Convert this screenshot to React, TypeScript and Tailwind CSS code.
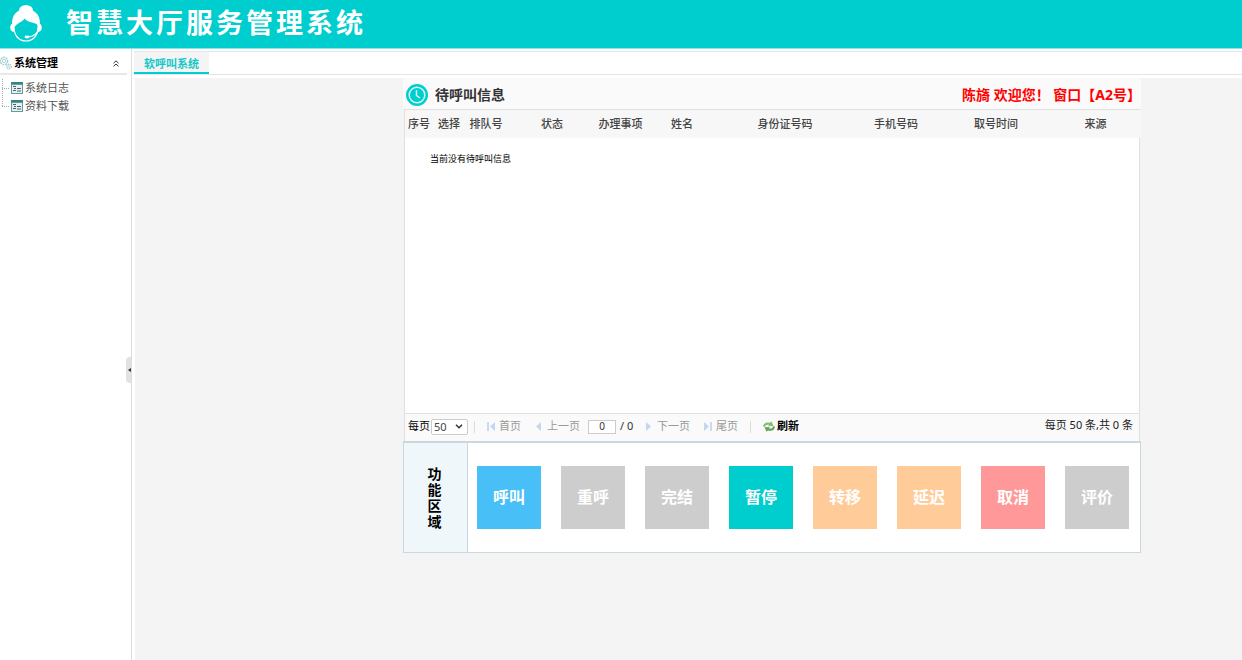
const columns = [
    { title: "序号", width: "w-[30px]" },
    { title: "选择", width: "w-[30px]" },
    { title: "排队号", width: "w-[44px]" },
    { title: "状态", width: "w-[88px]" },
    { title: "办理事项", width: "w-[49px]" },
    { title: "姓名", width: "w-[74px]" },
    { title: "身份证号码", width: "w-[132px]" },
    { title: "手机号码", width: "w-[90px]" },
    { title: "取号时间", width: "w-[110px]" },
    { title: "来源", width: "w-[89px]" },
]

const actions = [
    { label: "呼叫", color: "bg-[#49bff8]" },
    { label: "重呼", color: "bg-[#cdcdcd]" },
    { label: "完结", color: "bg-[#cdcdcd]" },
    { label: "暂停", color: "bg-[#00cdcd]" },
    { label: "转移", color: "bg-[#ffcc99]" },
    { label: "延迟", color: "bg-[#ffcc99]" },
    { label: "取消", color: "bg-[#ff9999]" },
    { label: "评价", color: "bg-[#cdcdcd]" },
]

const menus = ["系统日志", "资料下载"]

function LogoIcon() {
    return (
        <svg width="34" height="38" viewBox="0 0 34 38" fill="none">
            <ellipse cx="16" cy="5.500" rx="7" ry="5.500" fill="#fff" />
            <path d="M2 20C1.500 9 8 4 16 4S30.500 9 30 20L28.500 22C27.500 18.500 25.500 18.500 22 17.500C18 16.500 15.500 15 14.500 13.500C12.500 17 7 18 4.500 22Z" fill="#fff" />
            <path d="M3 18C0.500 19 0 21 0.300 23.500C0.600 25.500 2 27 4.500 27V18ZM28.500 18C31.500 19 32 21 31.700 23.500C31.400 25.500 30 27 27.500 27V18Z" fill="#fff" />
            <path d="M4 23C4.500 31 9 36 16 36S27.500 31 28 23" stroke="#fff" strokeWidth="1.200" />
            <path d="M28.500 25C27 29 23 31.500 18 32" stroke="#fff" strokeWidth="1.200" />
            <ellipse cx="17" cy="32" rx="2.500" ry="1.400" fill="#fff" />
        </svg>
    )
}

function GearsIcon() {
    return (
        <svg width="12" height="14" viewBox="0 0 12 14" fill="none" stroke="#9cc9c9">
            <circle cx="4" cy="5" r="3.600" strokeWidth="1.400" strokeDasharray="1.800 0.800" />
            <circle cx="4" cy="5" r="1.700" strokeWidth="0.800" />
            <circle cx="9" cy="10.500" r="2.300" strokeWidth="1.200" strokeDasharray="1.400 0.700" />
            <circle cx="9" cy="10.500" r="0.800" strokeWidth="0.600" />
        </svg>
    )
}

function PageIcon() {
    return (
        <svg width="12" height="12" viewBox="0 0 12 12">
            <rect width="12" height="12" fill="#5d9fa0" />
            <rect width="12" height="2" fill="#338688" />
            <rect x="1" y="3" width="10" height="8" fill="#e9eeee" />
            <path d="M2 4.500H5M3 6.500H5M2 8.500H5M6 6.500H10M6 9H10" stroke="#4b6666" />
        </svg>
    )
}

function ClockIcon() {
    return (
        <svg width="22" height="22" viewBox="0 0 22 22" fill="none">
            <circle cx="11" cy="11" r="11" fill="#00cdcd" />
            <circle cx="11" cy="11" r="7.800" stroke="#d6f7f7" strokeWidth="1.500" />
            <path d="M10.500 6V11.500L14 14" stroke="#d6f7f7" strokeWidth="1.500" />
        </svg>
    )
}

function RefreshIcon() {
    return (
        <svg width="12" height="11" viewBox="0 0 12 11">
            <path d="M0 5.500C0 2.500 3.500 0.500 7 1.800L8.500 0.300L10.500 5L5 5.200L6.200 4C4 3.500 2 4 2.200 6Z" fill="#86bd78" />
            <path d="M12 5.500C12 8.800 8.500 10.800 5 9.500L3.500 10.800L1.500 6.300L7 6L5.800 7.300C8 7.800 10 7.200 9.800 5.200Z" fill="#63a558" />
        </svg>
    )
}

function ArrowIcon({ next, edge }: { next?: boolean; edge?: boolean }) {
    return (
        <svg width={edge ? 8 : 5} height="9" viewBox={edge ? "0 0 8 9" : "0 0 5 9"} className={next ? "rotate-180" : ""}>
            {edge && <path d="M0 0H2V9H0Z" fill="#cbd9f2" />}
            <path d={edge ? "M8 0V9L3 4.500Z" : "M5 0V9L0 4.500Z"} fill="#c5d5f2" />
        </svg>
    )
}

function Sidebar() {
    return (
        <aside className="relative w-[132px] shrink-0 border-r border-[#dddddd] bg-white pt-0.5">
            <div className="mr-1 flex h-6 items-center border-b-2 border-[#e8e8e8] pt-0.5">
                <GearsIcon />
                <span className="ml-0.5 text-[11px] font-bold text-black">系统管理</span>
                <button aria-label="收起" className="mr-2 ml-auto">
                    <svg width="6" height="7" viewBox="0 0 6 7" fill="none" stroke="#333">
                        <path d="M0.500 3.200L3 0.800L5.500 3.200M0.500 6.400L3 4L5.500 6.400" />
                    </svg>
                </button>
            </div>
            <ul className="pt-1">
                {menus.map((item, index) => (
                    <li key={item} className="flex h-[18px] items-center pl-0.5">
                        <svg width="9" height="18" viewBox="0 0 9 18" stroke="#aaa" strokeDasharray="1 1" fill="none">
                            <path d={index === menus.length - 1 ? "M0.500 0V9" : "M0.500 0V18"} />
                            <path d="M0 9.500H7" />
                        </svg>
                        <a href="#" className="flex items-center gap-0.5 text-[11px] leading-[18px] text-[#555]">
                            <PageIcon />
                            {item}
                        </a>
                    </li>
                ))}
            </ul>
            <button
                aria-label="折叠菜单"
                className="absolute top-[308px] right-0 flex h-[26px] w-[5px] items-center justify-end rounded-l-sm bg-[#e2e2e2]"
            >
                <svg width="3" height="4" viewBox="0 0 3 4">
                    <path d="M3 0V4L0 2Z" fill="#333" />
                </svg>
            </button>
        </aside>
    )
}

function Pager() {
    return (
        <div className="flex h-[28px] items-center border-t border-[#e0e0e0] bg-[#fafafa] pr-1.5 pb-0.5 pl-[3px] text-[11px] text-[#999]">
            <label htmlFor="pageSize" className="mr-px text-black">每页</label>
            <div className="relative flex items-center">
                <select
                    id="pageSize"
                    defaultValue="50"
                    className="h-4 w-[37px] appearance-none rounded-xs border border-[#cccccc] bg-white pl-0.5 leading-[14px] text-[#444]"
                >
                    <option>50</option>
                    <option>100</option>
                </select>
                <svg width="8" height="5" viewBox="0 0 8 5" fill="none" className="pointer-events-none absolute right-[5px]">
                    <path d="M1 0.800L4 3.800L7 0.800" stroke="#333" strokeWidth="1.500" />
                </svg>
            </div>
            <span className="mr-3 ml-1.5 h-3 w-px bg-[#dddddd]"></span>
            <button className="flex items-center gap-1"><ArrowIcon edge />首页</button>
            <button className="ml-[15px] flex items-center gap-1.5"><ArrowIcon />上一页</button>
            <input
                aria-label="页码"
                defaultValue="0"
                className="ml-2 h-[14px] w-7 border border-[#cccccc] bg-white text-center text-[10px] text-[#333]"
            />
            <span className="ml-1 w-[18px] text-[#333]">/ 0</span>
            <button className="ml-2 flex items-center gap-1.5"><ArrowIcon next />下一页</button>
            <button className="ml-3.5 flex items-center gap-1"><ArrowIcon next edge />尾页</button>
            <span className="mx-3 h-3 w-px bg-[#dddddd]"></span>
            <button className="flex items-center gap-0.5 font-bold text-black"><RefreshIcon />刷新</button>
            <span className="ml-auto pb-0.5 text-[#222]">每页 50 条,共 0 条</span>
        </div>
    )
}

function WaitingPanel() {
    return (
        <section>
            <div className="flex h-[31px] items-center bg-[#fafafa] pt-0.5 pl-[3px]">
                <ClockIcon />
                <h2 className="ml-[7px] text-sm font-bold text-[#333]">待呼叫信息</h2>
                <p className="ml-auto text-sm font-bold text-[#ff0000]">陈旖 欢迎您！ 窗口【A2号】</p>
            </div>
            <div className="mx-px border-x border-t border-[#e0e0e0] bg-white">
                <div className="min-h-[303px]">
                    <table className="w-full table-fixed">
                        <thead>
                            <tr className="h-7 bg-[#f7f7f7] text-[11px] text-[#444]">
                                {columns.map((col) => (
                                    <th key={col.title} className={`${col.width} p-0 pr-0.5 font-medium whitespace-nowrap`}>{col.title}</th>
                                ))}
                            </tr>
                        </thead>
                        <tbody>
                            <tr>
                                <td colSpan={columns.length} className="h-[42px] pl-[25px] text-[9px] text-black">当前没有待呼叫信息</td>
                            </tr>
                        </tbody>
                    </table>
                </div>
                <Pager />
            </div>
        </section>
    )
}

function ActionPanel() {
    return (
        <section className="flex min-h-[112px] border border-t-2 border-[#c9d8de] bg-white">
            <div className="flex w-16 shrink-0 items-center justify-center border-r border-[#c9d8de] bg-[#eff7fa] pr-0.5">
                <h2 className="w-[14px] text-sm leading-4 font-bold text-black">功能区域</h2>
            </div>
            <div className="flex grow items-center justify-between pr-[11px] pl-[9px]">
                {actions.map((action) => (
                    <button key={action.label} className={`h-[63px] w-16 pb-0.5 text-base font-bold text-white ${action.color}`}>
                        {action.label}
                    </button>
                ))}
            </div>
        </section>
    )
}

export default function App() {
    return (
        <div className="flex h-screen flex-col bg-white font-['Noto_Sans','Noto_Sans_CJK_SC',sans-serif]">
            <header className="flex h-[49px] shrink-0 items-center border-b border-[#8ce6e6] bg-[#00cdcd] pl-2.5">
                <LogoIcon />
                <h1 className="ml-[22px] pb-0.5 text-[27px] leading-10 font-bold tracking-[3px] text-white">智慧大厅服务管理系统</h1>
            </header>
            <div className="flex min-h-0 grow">
                <Sidebar />
                <div className="flex min-w-0 grow flex-col pt-0.5">
                    <nav className="ml-0.5 flex h-6 border-t border-b border-[#e5e5e5]">
                        <a href="#" className="flex items-center border-b-2 border-[#00cdcd] bg-[#f4f4f4] px-2.5 pt-1 text-[11px] font-bold text-[#12c8c8]">
                            软呼叫系统
                        </a>
                    </nav>
                    <main className="mt-[3px] ml-[3px] grow bg-[#f4f4f4]">
                        <div className="mr-[101px] ml-auto w-2/3">
                            <WaitingPanel />
                            <ActionPanel />
                        </div>
                    </main>
                </div>
            </div>
        </div>
    )
}
